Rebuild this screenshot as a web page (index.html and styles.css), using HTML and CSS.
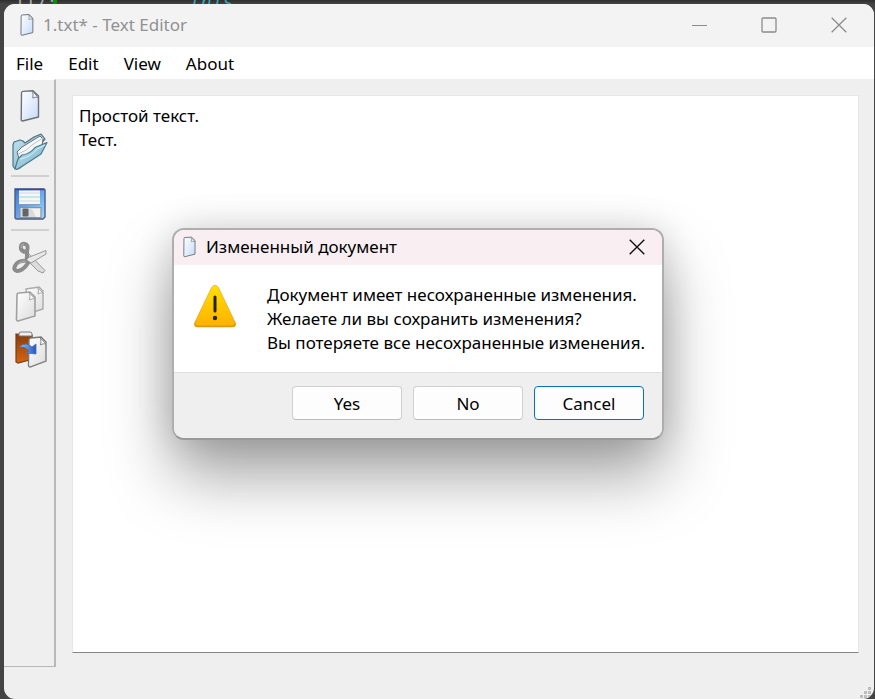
FILE: index.html
```html
<!DOCTYPE html>
<html lang="en">
<head>
<meta charset="utf-8">
<title>1.txt* - Text Editor</title>
<link rel="stylesheet" href="styles.css">
</head>
<body>
<svg class="defs" aria-hidden="true">
  <defs>
    <linearGradient id="paper" x1="0" y1="0" x2="1" y2="1"><stop offset="0" stop-color="#fdfeff"/><stop offset=".5" stop-color="#e3edfc"/><stop offset="1" stop-color="#c3d9fa"/></linearGradient>
    <linearGradient id="grey" x1="0" y1="0" x2="1" y2="1"><stop offset="0" stop-color="#fff"/><stop offset="1" stop-color="#dcdcdc"/></linearGradient>
    <linearGradient id="folder" x1="0" y1="0" x2="1" y2="1"><stop offset="0" stop-color="#c5e6f0"/><stop offset="1" stop-color="#6fadc6"/></linearGradient>
    <linearGradient id="disk" x1="0" y1="0" x2="1" y2="1"><stop offset="0" stop-color="#3f74d8"/><stop offset=".5" stop-color="#69a7ee"/><stop offset="1" stop-color="#a4dcf5"/></linearGradient>
    <linearGradient id="board" x1="0" y1="0" x2="0" y2="1"><stop offset="0" stop-color="#8a3d0c"/><stop offset="1" stop-color="#d8640f"/></linearGradient>
    <linearGradient id="arrow" x1="0" y1="0" x2="1" y2="0"><stop offset="0" stop-color="#a3c2ef"/><stop offset="1" stop-color="#2458be"/></linearGradient>
    <linearGradient id="warn" x1="0" y1="0" x2="0" y2="1"><stop offset="0" stop-color="#ffe000"/><stop offset="1" stop-color="#ffb000"/></linearGradient>
    <symbol id="page" viewBox="0 0 20 32">
      <path d="M1.5 3Q1.5 1.5 3 1.4L13 .8L18.5 6V27L2.5 31Q1.2 31 1.2 29.5Z" fill="url(#paper)" stroke="#6c7078" stroke-width="1.4" stroke-linejoin="round"/>
      <path d="M12.6 1.2Q13.4 4.8 12.8 8Q15.5 6.5 18.3 7.8Z" fill="#fafafa" stroke="#7c8088" stroke-width="1"/>
    </symbol>
  </defs>
</svg>

<div class="backdrop" aria-hidden="true"><span class="code-left">117:</span><span class="mark"></span><span class="code-mid">this.</span></div>

<div class="window">
  <header class="titlebar">
    <svg class="title-icon" aria-hidden="true"><use href="#page"/></svg>
    <h1 class="title">1.txt* - Text Editor</h1>
    <div class="window-controls">
      <button class="win-btn" aria-label="Minimize"><svg viewBox="0 0 16 16"><path d="M1 8.5H16" stroke-width="1"/></svg></button>
      <button class="win-btn" aria-label="Maximize"><svg viewBox="0 0 16 16"><rect x="1" y="1" width="14" height="14" rx="1"/></svg></button>
      <button class="win-btn" aria-label="Close"><svg viewBox="0 0 16 16"><path d="M.7 .7L15.3 15.3M15.3 .7L.7 15.3"/></svg></button>
    </div>
  </header>

  <nav class="menubar">
    <button class="menu">File</button>
    <button class="menu">Edit</button>
    <button class="menu">View</button>
    <button class="menu">About</button>
  </nav>

  <main class="workspace">
    <div class="toolbar" role="toolbar" aria-label="File tools">
      <button class="tool tool-new" aria-label="New"><svg class="page-icon"><use href="#page"/></svg></button>
      <button class="tool tool-open" aria-label="Open">
        <svg viewBox="0 0 36 38">
          <path d="M1 12L2 9L8 7L11 8L13 10L22 4L29 1L33 6L8 35L3 36L1 33Z" fill="url(#folder)" stroke="#4a7482" stroke-width="1.2" stroke-linejoin="round"/>
          <path d="M5 19L10 14L28 3L31 6L30 13L8 29Z" fill="#f4f6f8" stroke="#6e6e72"/>
          <path d="M6 21Q15 18 20 12L31 5" fill="none" stroke="#c4c6ca"/>
          <path d="M3 35.5L6 26L10 22Q18 21 23 14.5L35 9.500L29 21Q17 29 5 36.500Z" fill="url(#folder)" stroke="#4a7a8e" stroke-width="1.2" stroke-linejoin="round"/>
          <path d="M8 26Q19 24 25 16L33 12" fill="none" stroke="#d8f1f7"/>
        </svg>
      </button>
      <hr class="divider">
      <button class="tool tool-save" aria-label="Save">
        <svg viewBox="0 0 36 38">
          <path d="M3 4H32Q33 4 33 5V32L31 34H5Q3 34 3 32V5Z" fill="url(#disk)" stroke="#4d5c80" stroke-width="1.4"/>
          <path d="M3 4.500H32" stroke="#4a3fa1" stroke-width="1.5"/>
          <rect x="7" y="5.500" width="21" height="14" fill="#f3f7f7"/>
          <path d="M7 8H28M7 16H28" stroke="#d3d8e0"/><path d="M7 12H28" stroke="#b0e3dc" stroke-width="1.500"/>
          <path d="M7 19.500H28" stroke="#7f9cc4"/>
          <rect x="8" y="22.500" width="21" height="10" fill="#d9dbdb" stroke="#8a929c"/>
          <rect x="10.500" y="23.500" width="6" height="8" rx="1" fill="#60666c"/>
          <path d="M20 24H28V32H24Z" fill="#f2f2f2"/>
        </svg>
      </button>
      <hr class="divider">
      <button class="tool tool-cut" aria-label="Cut">
        <svg viewBox="0 0 36 38" fill="none">
          <path d="M15 13L33 31.500L31 34L26 32L13 19Z" fill="#dcdcdc" stroke="#999"/>
          <path d="M34 11.500L34 15L19 24L14 22L15 19Z" fill="#e8e8e8" stroke="#999"/>
          <path d="M15 12Q17 6 13 5Q8 4 9 10Q11 14 15 12Z" stroke="#8c8c8c" stroke-width="4"/>
          <path d="M15 22Q6 21 3 27Q1 31 5 32Q11 32 16 24Z" stroke="#8c8c8c" stroke-width="4"/>
          <path d="M5 27Q8 22 14 22M9 9Q9 5 12 5" stroke="#b5b5b5"/>
          <path d="M15 13V22" stroke="#8c8c8c" stroke-width="4"/><circle cx="17" cy="20.500" r="1.500" fill="#eee"/>
        </svg>
      </button>
      <button class="tool tool-copy" aria-label="Copy">
        <svg viewBox="0 0 36 38">
          <path d="M14 4L27 2L31 6V24L15 29Z" fill="url(#grey)" stroke="#aaa" stroke-width="1.400"/>
          <path d="M26 3Q27 6 26 9Q29 7 31 8Z" fill="#fff" stroke="#aaa"/>
          <path d="M5 10Q5 8 7 8L18 7L23 12V31L6 36Q4 36 4.500 33Z" fill="url(#grey)" stroke="#a0a0a0" stroke-width="1.600"/>
          <path d="M17.500 8Q18.500 11 17.500 15Q20 13 23 14Z" fill="#fff" stroke="#a6a6a6"/>
        </svg>
      </button>
      <button class="tool tool-paste" aria-label="Paste">
        <svg viewBox="0 0 36 38">
          <path d="M4 3L20 4L21 28L6 32L4 31Z" fill="url(#board)" stroke="#7a3f1c" stroke-width="1.200"/>
          <path d="M7 3Q7 1 9 1H18Q20 1 20 3V5H7Z" fill="#eee" stroke="#7a7a7a"/>
          <path d="M17 9Q17 7 19 7L29 6L34 11V30L18 36Q16 36 16.500 33Z" fill="url(#grey)" stroke="#75787b" stroke-width="1.300"/>
          <path d="M28.500 7Q29.500 10 28.500 14Q31 12 34 13Z" fill="#fff" stroke="#888"/>
          <path d="M7 16Q14 10 20 16L24 13V23L14 22L17 20Q13 15 7 16Z" fill="url(#arrow)" stroke="#4a6fb5" stroke-width=".8"/>
        </svg>
      </button>
    </div>
    <textarea class="editor" aria-label="Document text" spellcheck="false">Простой текст.
Тест.</textarea>
  </main>
  <footer class="statusbar">
    <svg class="grip" viewBox="0 0 11 11" aria-hidden="true"><path d="M8 0h3v3h-3zM4 4h3v3h-3zM8 4h3v3h-3zM0 8h3v3h-3zM4 8h3v3h-3zM8 8h3v3h-3z"/></svg>
  </footer>
</div>

<dialog class="dialog" open aria-labelledby="dialog-title">
  <header class="dialog-bar">
    <svg class="dialog-icon" aria-hidden="true"><use href="#page"/></svg>
    <h2 class="dialog-title" id="dialog-title">Измененный документ</h2>
    <button class="dialog-close" aria-label="Close"><svg viewBox="0 0 16 16"><path d="M.7 .7L15.3 15.3M15.3 .7L.7 15.3"/></svg></button>
  </header>
  <div class="dialog-body">
    <svg class="warning" viewBox="0 0 44 44" aria-hidden="true">
      <path d="M18.600 3.500Q22 -1 25.400 3.500L42 38Q44 43 39 43H5Q0 43 2 38Z" fill="url(#warn)"/>
      <path d="M18.600 3.500Q22 -1 25.400 3.500L42 38Q44 43 39 43H5Q0 43 2 38Z" fill="none" stroke="#dc9412" stroke-opacity=".55"/>
      <path d="M2 38Q0 43 5 43H39Q44 43 42 38L41.400 36.800Q42.500 41.600 38.500 41.600H5.500Q1.500 41.600 2.600 36.800Z" fill="#e09a12"/>
      <path d="M22 13V27" stroke="#242424" stroke-width="3" stroke-linecap="round"/><circle cx="22" cy="34" r="2.200" fill="#242424"/>
    </svg>
    <p class="message">Документ имеет несохраненные изменения.<br>Желаете ли вы сохранить изменения?<br>Вы потеряете все несохраненные изменения.</p>
  </div>
  <div class="dialog-actions">
    <button class="choice">Yes</button>
    <button class="choice">No</button>
    <button class="choice choice-default">Cancel</button>
  </div>
</dialog>
</body>
</html>
```
FILE: styles.css
```css
* { box-sizing: border-box; }

body {
  margin: 0;
  min-height: 100vh;
  display: flex;
  padding: 4px 1px 0 4px;
  background: linear-gradient(#2e2e2e, #444 4px);
  color: #000;
  font: 17px/24px "Noto Sans", "Open Sans", sans-serif;
  overflow: hidden;
}

button { font: inherit; color: inherit; border: 0; padding: 0; background: none; }
svg { display: block; }
.defs { position: absolute; width: 0; height: 0; }

.backdrop {
  position: absolute;
  inset: 0 0 auto;
  height: 4px;
  overflow: hidden;
  font: 18px/20px "DejaVu Sans Mono", monospace;
}
.backdrop span { position: absolute; top: -8px; }
.code-left { left: 14px; color: #a9a9a9; }
.code-mid { left: 190px; color: #3ba9b8; font-style: italic; }
.backdrop .mark { left: 53px; top: 0; width: 4px; height: 4px; background: #0a8a0a; }

.window {
  position: relative;
  flex: 1;
  display: flex;
  flex-direction: column;
  border-radius: 11px;
  background: #efefef;
  overflow: hidden;
}

.titlebar {
  display: flex;
  align-items: center;
  height: 43px;
  padding: 0 0 2px 16px;
  background: #f3f3f3;
  color: #919191;
}
.title-icon { width: 14px; height: 22px; margin-right: 9px; }
.title { margin: 0; font-size: 17px; font-weight: 400; }
.window-controls { display: flex; margin-left: auto; }
.win-btn { width: 70px; height: 41px; display: grid; place-items: center; }
.win-btn svg { width: 16px; height: 16px; fill: none; stroke: #8c8c8c; stroke-width: 1.3; }

.menubar { display: flex; height: 32px; background: #fff; }
.menu { padding: 2px 12px 0; margin-right: 1px; }

.workspace { flex: 1; display: flex; }
.toolbar {
  width: 52px;
  padding: 7px 5px 0 7px;
  border-right: 2px solid #b8b8b8;
  border-bottom: 1px solid #b8b8b8;
  border-top: 1px solid #fff;
}
.tool { display: block; width: 37px; height: 38px; margin-bottom: 8px; }
.tool svg { width: 36px; height: 38px; margin-left: 1px; }
.tool .page-icon { width: 20px; height: 32px; margin: 0 auto; }
.tool-open { margin-bottom: 4px; }
.divider { height: 2px; margin: 0 0 8px; border: 0; background: #d0d0d0; }
.tool-save { margin-bottom: 6px; }

.editor {
  flex: 1;
  min-width: 0;
  margin: 16px 15px 14px 16px;
  padding: 8px 6px;
  border: 1px solid #e6e6e6;
  border-bottom-color: #868686;
  border-radius: 1px;
  outline: 0;
  background: #fff;
  color: #000;
  font: inherit;
  resize: none;
}

.statusbar { height: 32px; display: flex; justify-content: flex-end; align-items: flex-end; padding: 0 3px 1px; }
.grip { width: 11px; height: 11px; fill: #bdbdbd; }

.dialog {
  position: absolute;
  left: 172px;
  top: 228px;
  width: 492px;
  margin: 0;
  padding: 0;
  border: 2px solid #aeaeae;
  border-bottom-color: #999;
  border-radius: 12px;
  background: #fff;
  color: #000;
  overflow: hidden;
  box-shadow: 0 36px 64px rgba(0, 0, 0, .36), 0 0 36px rgba(0, 0, 0, .14);
}
.dialog-bar { display: flex; align-items: center; height: 35px; padding: 0 17px 2px 9px; background: #f9eff3; }
.dialog-icon { width: 13px; height: 22px; margin-right: 10px; }
.dialog-title { margin: 0; font-size: 17px; font-weight: 400; }
.dialog-close { margin-left: auto; }
.dialog-close svg { width: 16px; height: 16px; fill: none; stroke: #111; stroke-width: 1.4; }
.dialog-body { display: flex; gap: 30px; padding: 18px 16px 17px 19px; }
.warning { flex: none; width: 44px; height: 44px; margin-top: 1px; }
.message { margin: 0; white-space: nowrap; }
.dialog-actions {
  display: flex;
  justify-content: flex-end;
  gap: 11px;
  padding: 13px 18px 18px;
  border-top: 1px solid #dedede;
  background: #efefef;
}
.choice {
  width: 110px;
  height: 34px;
  padding-top: 1px;
  border: 1px solid #d0d0d0;
  border-bottom-color: #bcbcbc;
  border-radius: 4px;
  background: #fdfdfd;
}
.choice-default { border-color: #0a6fc2; }
```
